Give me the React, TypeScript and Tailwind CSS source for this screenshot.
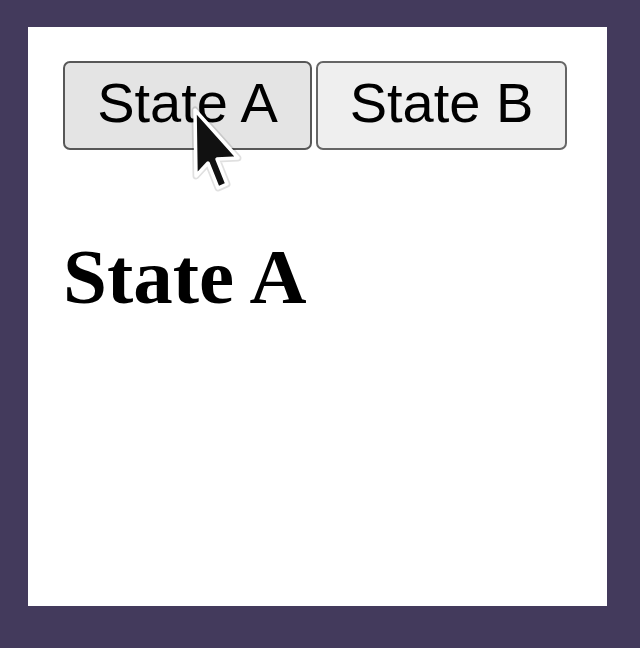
import { useState } from 'react';

function Cursor() {
  return (
    <svg className="absolute left-[162px] top-[78px] pointer-events-none" width="56" height="92" viewBox="0 0 56 92">
      <path d="M5 5 L6 71 L18 58 L28 83 L37 79 L27 54 L48 53 Z" fill="none" stroke="#000" strokeOpacity="0.12" strokeWidth="7" strokeLinejoin="round" />
      <path d="M5 5 L6 71 L18 58 L28 83 L37 79 L27 54 L48 53 Z" fill="#111" stroke="#fff" strokeWidth="3.5" strokeLinejoin="round" />
    </svg>
  );
}

export default function App() {
  const [state, setState] = useState<'A' | 'B'>('A');

  return (
    <div className="w-[640px] h-[648px] bg-[#433a5c] pt-[27px] pl-[28px]">
      <div className="relative w-[579px] h-[579px] bg-white pt-[34px] pl-[35px]">
        <div className="flex gap-[4px]">
          <button
            onClick={() => setState('A')}
            className="w-[249px] h-[89px] pb-[5px] flex items-center justify-center bg-[#e4e4e4] border-2 border-[#575757] rounded-[7px] text-[56px] text-black font-['Liberation_Sans',Arial,sans-serif]"
          >
            State A
          </button>
          <button
            onClick={() => setState('B')}
            className="w-[251px] h-[89px] pb-[5px] flex items-center justify-center bg-[#efefef] border-2 border-[#666] rounded-[7px] text-[56px] text-black font-['Liberation_Sans',Arial,sans-serif]"
          >
            State B
          </button>
        </div>
        <h2 className="mt-[87px] text-[79px] leading-none font-bold text-black font-['Liberation_Serif','Times_New_Roman',serif]">
          State {state}
        </h2>
        <Cursor />
      </div>
    </div>
  );
}
